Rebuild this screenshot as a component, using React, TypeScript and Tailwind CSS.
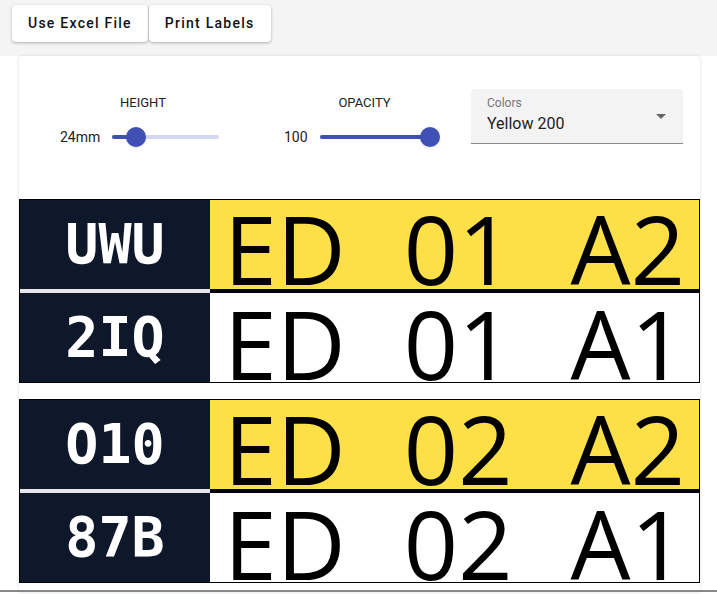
const labelGroups = [
  [
    { code: 'UWU', parts: ['ED', '01', 'A2'], yellow: true },
    { code: '2IQ', parts: ['ED', '01', 'A1'], yellow: false },
  ],
  [
    { code: 'O10', parts: ['ED', '02', 'A2'], yellow: true },
    { code: '87B', parts: ['ED', '02', 'A1'], yellow: false },
  ],
]

function Slider({ value, width, pos }: { value: string; width: number; pos: number }) {
  return (
    <div className="flex items-center h-5">
      <span className="text-[14px] text-[#222] mr-3">{value}</span>
      <div className="relative h-1 rounded-full bg-[#d3d6ef]" style={{ width }}>
        <div className="absolute left-0 top-0 h-1 rounded-full bg-[#3f51b5]" style={{ width: pos }} />
        <div
          className="absolute top-1/2 w-5 h-5 -mt-2.5 -ml-2.5 rounded-full bg-[#3f51b5] shadow-sm"
          style={{ left: pos }}
        />
      </div>
    </div>
  )
}

function LabelRow({ code, parts, yellow, first }: { code: string; parts: string[]; yellow: boolean; first: boolean }) {
  return (
    <div className={`flex ${first ? 'h-[93px]' : 'h-[89px]'}`}>
      <div
        className={`w-[190px] flex items-center justify-center bg-[#0f172a] text-white font-bold text-[55px] ${
          first ? 'border-b-4 border-[#e5e7eb]' : ''
        }`}
        style={{ fontFamily: '"DejaVu Sans Mono", monospace' }}
      >
        {code}
      </div>
      <div
        className={`flex-1 flex items-center justify-between px-[14px] ${first ? 'pt-[8px]' : 'pt-[12px]'} text-black text-[95px] leading-none ${
          yellow ? 'bg-[#fde047]' : 'bg-white'
        } ${first ? 'border-b-4 border-black' : ''}`}
        style={{ fontFamily: '"Open Sans", sans-serif' }}
      >
        {parts.map((p) => (
          <span key={p}>{p}</span>
        ))}
      </div>
    </div>
  )
}

export default function App() {
  return (
    <div className="w-[717px] h-[594px] bg-white overflow-hidden" style={{ fontFamily: 'Roboto, sans-serif' }}>
      <div className="h-[56px] bg-[#f4f4f4] flex items-start pt-[5px] pl-[12px] gap-px">
        <button className="h-[37px] px-4 bg-white rounded shadow-[0_1px_3px_rgba(0,0,0,0.3)] text-[14px] font-medium tracking-[1.25px] text-[#111]">
          Use Excel File
        </button>
        <button className="h-[37px] px-4 bg-white rounded shadow-[0_1px_3px_rgba(0,0,0,0.3)] text-[14px] font-medium tracking-[1.25px] text-[#111]">
          Print Labels
        </button>
      </div>

      <div className="ml-[19px] w-[681px] h-[536px] bg-white rounded-t shadow-[0_0_3px_rgba(0,0,0,0.15)]">
        <div className="h-[143px] flex items-start">
          <div className="ml-[41px] mt-[40px] w-[160px] flex flex-col">
            <div className="text-[13px] leading-[14px] text-[#222] text-center pl-[6px]">HEIGHT</div>
            <div className="mt-[17px]">
              <Slider value="24mm" width={107} pos={24} />
            </div>
          </div>
          <div className="ml-[67px] mt-[40px] w-[153px] flex flex-col">
            <div className="text-[13px] leading-[14px] text-[#222] text-center pl-[2px]">OPACITY</div>
            <div className="mt-[17px] -ml-[3px]">
              <Slider value="100" width={110} pos={110} />
            </div>
          </div>
          <div className="ml-[31px] mt-[33px] w-[212px] h-[55px] bg-[#f3f3f3] rounded-t border-b border-[#8a8a8a] relative px-4 pt-[7px]">
            <div className="text-[12px] leading-[14px] text-[#777]">Colors</div>
            <div className="text-[16px] leading-[20px] text-[#222] mt-[4px]">Yellow 200</div>
            <div className="absolute right-[17px] top-[25px] w-0 h-0 border-l-[5px] border-r-[5px] border-t-[5px] border-l-transparent border-r-transparent border-t-[#666]" />
          </div>
        </div>

        <div className="flex flex-col gap-4">
          {labelGroups.map((group, gi) => (
            <div key={gi} className="border border-black flex flex-col">
              {group.map((row, ri) => (
                <LabelRow key={row.code} {...row} first={ri === 0} />
              ))}
            </div>
          ))}
        </div>
      </div>
      <div className="h-[2px] bg-[#888] -mt-[2px] relative" />
    </div>
  )
}
